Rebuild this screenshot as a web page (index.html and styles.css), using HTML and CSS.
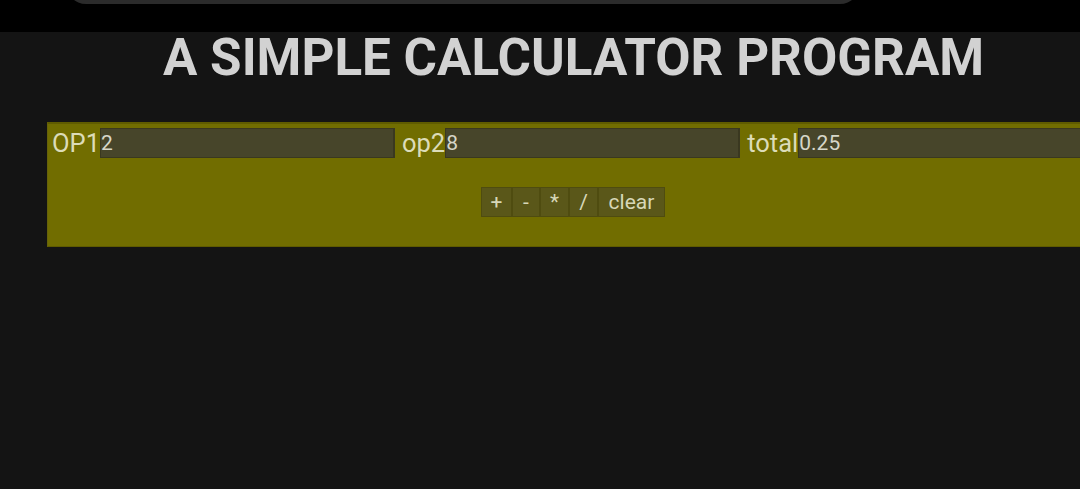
FILE: index.html
```html
<!DOCTYPE html>
<html>
<head>
<meta charset="utf-8">
<link rel="stylesheet" href="styles.css">
</head>
<body>
<div class="topbar"><div class="pill"></div></div>
<h1 class="title">A SIMPLE CALCULATOR PROGRAM</h1>
<div class="calc">
  <div class="row">
    <label class="lbl">OP1</label><input class="field" value="2">
    <label class="lbl lbl-gap">op2</label><input class="field" value="8">
    <label class="lbl lbl-gap">total</label><input class="field field-total" value="0.25">
  </div>
  <div class="buttons">
    <button class="btn btn-op">+</button><button class="btn btn-op">-</button><button class="btn btn-op">*</button><button class="btn btn-op">/</button><button class="btn btn-clear">clear</button>
  </div>
</div>
</body>
</html>
```
FILE: styles.css
```css
html, body {
  margin: 0;
  padding: 0;
  background: #141414;
  overflow: hidden;
  font-family: Roboto, "Liberation Sans", sans-serif;
}
.topbar {
  height: 32px;
  background: #000;
  overflow: hidden;
  padding-left: 66px;
}
.pill {
  width: 794px;
  height: 40px;
  margin-top: -36px;
  background: #2b2b2b;
  border-radius: 24px;
}
.title {
  margin: 0;
  padding: 0 0 0 163px;
  height: 90px;
  line-height: 52px;
  font-size: 51.2px;
  font-weight: 700;
  color: #d2d2d2;
  white-space: nowrap;
}
.calc {
  margin-left: 47px;
  width: 1100px;
  height: 125px;
  box-sizing: border-box;
  background: #716d00;
  border-top: 2px solid #5f5b00;
  border-left: 1px solid #66620a;
  border-bottom: 1px solid #5f5b00;
  padding: 4px 0 0 4px;
}
.row {
  display: flex;
  align-items: flex-start;
  white-space: nowrap;
}
.lbl {
  font-size: 25.5px;
  color: #dcdcb8;
  line-height: 30px;
}
.lbl-gap { margin-left: 7px; }
.field {
  width: 295px;
  height: 30px;
  box-sizing: border-box;
  background: #47452a;
  border: 1px solid #3a3820;
  border-right: 2px solid #3a3820;
  color: #d6d6c8;
  font-family: Roboto, "Liberation Sans", sans-serif;
  font-size: 21px;
  padding: 0;
  outline: none;
}
.field-total { width: 300px; }
.buttons {
  display: flex;
  justify-content: flex-start;
  margin-top: 29px;
  margin-left: 429px;
}
.btn {
  height: 30px;
  box-sizing: border-box;
  background: #5a5719;
  border: 1px solid #4f4c10;
  color: #d7d7b8;
  font-family: Roboto, "Liberation Sans", sans-serif;
  font-size: 21px;
  padding: 0;
  margin: 0;
  line-height: 26px;
}
.btn-op:nth-child(1) { width: 31px; }
.btn-op:nth-child(2) { width: 28px; }
.btn-op:nth-child(3) { width: 29px; }
.btn-op:nth-child(4) { width: 29px; }
.btn-clear { width: 67px; }
```
